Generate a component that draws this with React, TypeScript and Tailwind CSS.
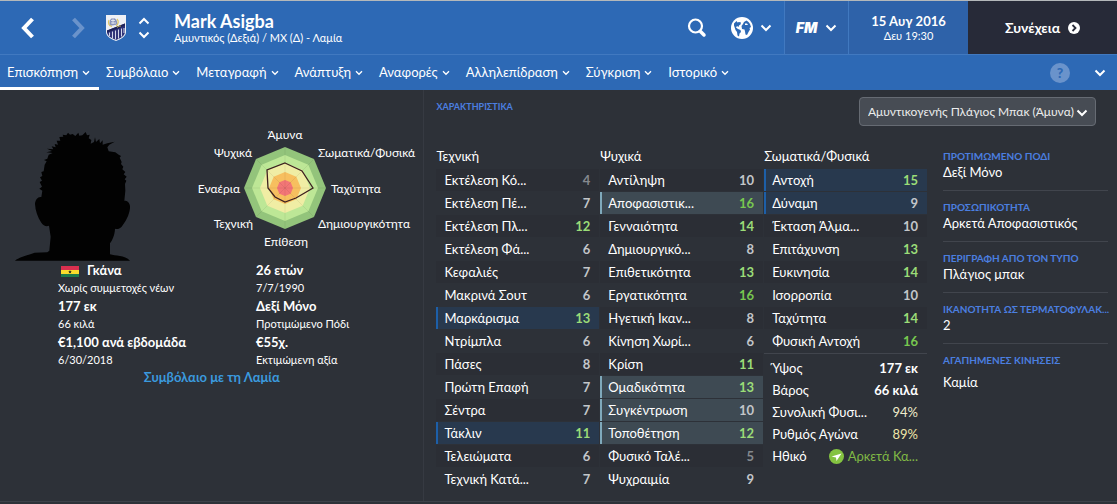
import { ReactNode, useState } from "react";

type Attr = { name: string; value: number; mark?: "key" | "useful" };

const technical: Attr[] = [
  { name: "Εκτέλεση Κό...", value: 4 },
  { name: "Εκτέλεση Πέ...", value: 7 },
  { name: "Εκτέλεση Πλ...", value: 12 },
  { name: "Εκτέλεση Φά...", value: 6 },
  { name: "Κεφαλιές", value: 7 },
  { name: "Μακρινά Σουτ", value: 6 },
  { name: "Μαρκάρισμα", value: 13, mark: "key" },
  { name: "Ντρίμπλα", value: 6 },
  { name: "Πάσες", value: 8 },
  { name: "Πρώτη Επαφή", value: 7 },
  { name: "Σέντρα", value: 7 },
  { name: "Τάκλιν", value: 11, mark: "key" },
  { name: "Τελειώματα", value: 6 },
  { name: "Τεχνική Κατά...", value: 7 },
];

const mental: Attr[] = [
  { name: "Αντίληψη", value: 10 },
  { name: "Αποφασιστικ...", value: 16, mark: "useful" },
  { name: "Γενναιότητα", value: 14 },
  { name: "Δημιουργικό...", value: 8 },
  { name: "Επιθετικότητα", value: 13 },
  { name: "Εργατικότητα", value: 16 },
  { name: "Ηγετική Ικαν...", value: 8 },
  { name: "Κίνηση Χωρί...", value: 6 },
  { name: "Κρίση", value: 11 },
  { name: "Ομαδικότητα", value: 13, mark: "useful" },
  { name: "Συγκέντρωση", value: 10, mark: "useful" },
  { name: "Τοποθέτηση", value: 12, mark: "useful" },
  { name: "Φυσικό Ταλέ...", value: 5 },
  { name: "Ψυχραιμία", value: 9 },
];

const physical: Attr[] = [
  { name: "Αντοχή", value: 15, mark: "key" },
  { name: "Δύναμη", value: 9, mark: "key" },
  { name: "Έκταση Άλμα...", value: 10 },
  { name: "Επιτάχυνση", value: 13 },
  { name: "Ευκινησία", value: 14 },
  { name: "Ισορροπία", value: 10 },
  { name: "Ταχύτητα", value: 14 },
  { name: "Φυσική Αντοχή", value: 16 },
];

const condition = [
  { name: "Ύψος", value: "177 εκ", style: "font-bold" },
  { name: "Βάρος", value: "66 κιλά", style: "font-bold" },
  { name: "Συνολική Φυσι...", value: "94%", style: "text-[#f0eccb]" },
  { name: "Ρυθμός Αγώνα", value: "89%", style: "text-[#efe6a8]" },
];

const tabs = [
  "Επισκόπηση",
  "Συμβόλαιο",
  "Μεταγραφή",
  "Ανάπτυξη",
  "Αναφορές",
  "Αλληλεπίδραση",
  "Σύγκριση",
  "Ιστορικό",
];

const details = [
  { label: "ΠΡΟΤΙΜΩΜΕΝΟ ΠΟΔΙ", value: "Δεξί Μόνο" },
  { label: "ΠΡΟΣΩΠΙΚΟΤΗΤΑ", value: "Αρκετά Αποφασιστικός" },
  { label: "ΠΕΡΙΓΡΑΦΗ ΑΠΟ ΤΟΝ ΤΥΠΟ", value: "Πλάγιος μπακ" },
  { label: "ΙΚΑΝΟΤΗΤΑ ΩΣ ΤΕΡΜΑΤΟΦΥΛΑΚ...", value: "2" },
];

function valueColor(v: number) {
  if (v > 15) return "text-[#78c850]";
  if (v > 10) return "text-[#9bdc78]";
  if (v > 5) return "text-[#c3c6ca]";
  return "text-[#85898e]";
}

function Chevron({ className = "" }: { className?: string }) {
  return (
    <svg viewBox="0 0 12 8" className={className} fill="none" stroke="currentColor" strokeWidth="2">
      <path d="M1.5 1.5 6 6l4.5-4.5" />
    </svg>
  );
}

function Crest() {
  return (
    <svg viewBox="0 0 20 26" className="h-[26px] w-5">
      <path d="M0 0h20v17c0 4-5 7.500-10 9C5 24.500 0 21 0 17z" fill="#eef0f5" />
      <path d="M1 15.500 19 8.500V17c0 3.500-4.500 6.500-9 8-4.500-1.500-9-4.500-9-8z" fill="#2a2f75" />
      <path d="M3.500 17.500v3.500M6.500 16.500v7M9.500 15.500v9M12.500 14.500v9M15.500 13.500v8M18 13v5" stroke="#d3d7ea" strokeWidth="1.100" />
      <path d="M1 15.500 19 8.500v2L1 17.500z" fill="#1e2257" />
      <path d="M3.500 11c-.5-4 .5-8 3.500-8s4.500 3 4.500 6.500z" fill="#8b95bd" />
      <path d="M3 5c-1.500 3 0 6 3 6.500M11 4c2 2 1.500 5.500-1 7" stroke="#e0c862" strokeWidth="1.200" fill="none" />
      <path d="M5 5.500h4M5 8h5M7 3v6" stroke="#eef0f5" strokeWidth=".8" />
      <path d="M11 12.500c1.500-1.200 2.500-1.500 4-1.500" stroke="#b9a552" strokeWidth="1" fill="none" />
    </svg>
  );
}

function Globe() {
  return (
    <svg viewBox="0 0 22 22" className="size-[22px]">
      <circle cx="11" cy="11" r="11" fill="#fff" />
      <path
        d="M3 6.500 5.500 4l1 1.500L8 5l2 .5-.5 2L8 8.500 7.500 10 6 9 5 10.500l2 1.500 2.500 1 .5 2-1.500 1.500-.5 3-1.500-1-.5-3.500L4.500 13 3.500 10 3 8.500z"
        fill="#2d69b5"
      />
      <path
        d="m12 7 1-2 2.500-1.500 2 1.500 1.500 2 1 3-1.500 1 .5 1.500-1.500 2.500-1.500 3-1.500-.5-.5-3-.5-2-2.500-.5-.5-3z"
        fill="#2d69b5"
      />
      <path d="M14 6.500h2l1 1.500h-3z" fill="#fff" />
    </svg>
  );
}

function Portrait() {
  return (
    <svg viewBox="42 36 348 387" className="h-[129px] w-[116px] shrink-0" aria-label="Mark Asigba">
      <path
        fill="#020202"
        d="M45 422C58 411 82 406 104 398L142 397 148 392 152 350 147 317C138 321 130 316 124 308 113 292 106 272 105 252 106 238 114 229 124 231L127 212 118 206 126 200 119 186 126 182 120 172 127 168 124 156 131 154 134 134 140 124 132 120 142 116 146 104 158 99 139 97 156 93 141 86 160 88 155 79 167 82 164 72 174 74 170 62 181 62 178 51 190 50 188 44 199 46 204 38 210 44 218 42 226 48 235 38 238 47 247 46 257 36 261 46 269 44 266 55 274 60 272 71 282 66 285 52 288 66 298 57 300 70 308 61 308 74 322 70 344 65 328 74 322 82 326 94 346 97 356 104 363 108 359 113 365 126 363 132 370 140 367 148 376 156 371 163 380 170 374 178 379 182 375 192 376 212 373 242C384 242 391 250 390 264 388 286 376 306 365 320 358 328 350 328 345 326 344 346 338 358 330 370L330 403C345 408 374 405 390 422Z"
      />
    </svg>
  );
}

const rings = [
  { r: 41, fill: "#93c47b" },
  { r: 33, fill: "#bde796" },
  { r: 25, fill: "#f0eda4" },
  { r: 16, fill: "#f7bf5f" },
  { r: 8, fill: "#f27676" },
];

const radarLabels = [
  { text: "Άμυνα", x: 95, y: 15, anchor: "middle" },
  { text: "Σωματικά/Φυσικά", x: 128, y: 33, anchor: "start" },
  { text: "Ταχύτητα", x: 141, y: 69, anchor: "start" },
  { text: "Δημιουργικότητα", x: 128, y: 104, anchor: "start" },
  { text: "Επίθεση", x: 96, y: 122, anchor: "middle" },
  { text: "Τεχνική", x: 63, y: 104, anchor: "end" },
  { text: "Εναέρια", x: 50, y: 69, anchor: "end" },
  { text: "Ψυχικά", x: 62, y: 33, anchor: "end" },
] as const;

function octagon(r: number) {
  return Array.from({ length: 8 }, (_, i) => {
    const a = (i * Math.PI) / 4;
    return `${95 + r * Math.sin(a)},${64 - r * Math.cos(a)}`;
  }).join(" ");
}

function Radar() {
  return (
    <svg viewBox="0 0 230 130" className="h-[130px] w-[230px] shrink-0">
      {rings.map((ring) => (
        <polygon key={ring.r} points={octagon(ring.r)} fill={ring.fill} />
      ))}
      <path d="M95 23v82M54 64h82M66 35l58 58M66 93l58-58" stroke="#000" strokeOpacity=".06" />
      <path
        d="M95 39 112 47 123 64 106 74 95 78 85 73 78 64 77 46z"
        fill="none"
        stroke="#3d2020"
        strokeWidth="1.300"
      />
      {radarLabels.map((l) => (
        <text key={l.text} x={l.x} y={l.y} textAnchor={l.anchor} className="fill-white text-[12px]">
          {l.text}
        </text>
      ))}
    </svg>
  );
}

function Flag() {
  return (
    <svg viewBox="0 0 18 11" className="h-[11px] w-[18px]">
      <rect width="18" height="4" fill="#d9304f" />
      <rect y="4" width="18" height="4" fill="#fbdc2c" />
      <rect y="8" width="18" height="3" fill="#1f7a4d" />
      <path d="m9 4 .5 1.300h1.300l-1 .8.400 1.400L9 6.700l-1.200.8.400-1.400-1-.8h1.300z" fill="#222" />
    </svg>
  );
}

function Fact({ title, sub }: { title: ReactNode; sub: string }) {
  return (
    <div>
      <div className="flex h-5 items-center text-[13px] font-bold">{title}</div>
      <div className="h-4 text-[11px] leading-[14px]">{sub}</div>
    </div>
  );
}

const rowStyle = {
  key: "border-[#1d5fa8] bg-[#28394e]",
  useful: "border-[#7fa9bb] bg-[#3e4a53]",
};

function AttributeTable({ title, items }: { title: string; items: Attr[] }) {
  return (
    <table className="w-full border-separate border-spacing-x-0 border-spacing-y-px text-[13px]">
      <caption className="h-6 text-left leading-6">{title}</caption>
      <tbody>
        {items.map((item, i) => {
          const plain = i % 2 ? "border-transparent" : "border-[#2b2e35] bg-[#2b2e35]";
          const style = item.mark ? rowStyle[item.mark] : plain;
          return (
            <tr key={item.name} className="h-[22px]">
              <th scope="row" className={`border-l-2 p-0 pl-1.5 text-left font-normal leading-[22px] whitespace-nowrap ${style}`}>
                {item.name}
              </th>
              <td className={`p-0 pr-[9px] text-right font-bold leading-[22px] ${style} ${valueColor(item.value)}`}>
                {item.value}
              </td>
            </tr>
          );
        })}
      </tbody>
    </table>
  );
}

export default function App() {
  const [tab, setTab] = useState(0);

  return (
    <div className="min-h-screen border-t border-[#b4b8ba] bg-[#2d3138] font-['Lato','Noto_Sans',sans-serif] text-white">
      <header className="flex h-[53px] bg-[#2d69b5]">
        <div className="flex flex-1 items-center pl-5">
          <button aria-label="Πίσω" className="w-[15px]">
            <svg viewBox="0 0 15 24" fill="none" stroke="#fff" strokeWidth="4">
              <path d="M12.500 3 4 12l8.500 9" />
            </svg>
          </button>
          <button aria-label="Εμπρός" className="ml-9 w-[15px]">
            <svg viewBox="0 0 15 24" fill="none" stroke="#6a93cb" strokeWidth="4">
              <path d="M2.500 3 11 12l-8.500 9" />
            </svg>
          </button>
          <div className="ml-5">
            <Crest />
          </div>
          <div className="ml-3 flex flex-col gap-1.5">
            <button aria-label="Προηγούμενος">
              <Chevron className="h-2 w-3 rotate-180" />
            </button>
            <button aria-label="Επόμενος">
              <Chevron className="h-2 w-3" />
            </button>
          </div>
          <div className="ml-6">
            <h1 className="text-[18px] font-bold leading-5">Mark Asigba</h1>
            <p className="text-[11px] leading-[13px]">Αμυντικός (Δεξιά) / ΜΧ (Δ) - Λαμία</p>
          </div>
        </div>
        <button aria-label="Αναζήτηση" className="mr-6">
          <svg viewBox="0 0 20 20" className="size-5" fill="none" stroke="#fff">
            <circle cx="8.500" cy="8" r="6.500" strokeWidth="2.200" />
            <path d="m13.500 13.500 3.500 3.500" strokeWidth="3.500" strokeLinecap="round" />
          </svg>
        </button>
        <button aria-label="Κόσμος" className="mr-3 flex items-center gap-[7px]">
          <Globe />
          <Chevron className="h-2 w-3" />
        </button>
        <button aria-label="FM" className="flex w-16 items-center justify-center gap-2 border-l border-[#4179c0] bg-[#2e62a9]">
          <span className="font-['Inter',sans-serif] text-[14px] font-black italic">FM</span>
          <Chevron className="h-2 w-3" />
        </button>
        <div className="flex w-[120px] flex-col items-center justify-center border-l border-[#4179c0] bg-[#2e62a9]">
          <span className="text-[13px] font-bold leading-4">15 Αυγ 2016</span>
          <span className="text-[11px] leading-[14px]">Δευ 19:30</span>
        </div>
        <button className="flex w-[149px] items-center justify-center gap-2 bg-[#272a38] text-[14px] font-bold">
          Συνέχεια
          <svg viewBox="0 0 12 12" className="size-3">
            <circle cx="6" cy="6" r="6" fill="#fff" />
            <path d="m4.500 3 3 3-3 3" fill="none" stroke="#272a38" strokeWidth="1.800" />
          </svg>
        </button>
      </header>

      <nav className="flex h-9 items-stretch border-t border-[#4179c0] bg-[#2d69b5]">
        {tabs.map((t, i) => (
          <button
            key={t}
            onClick={() => setTab(i)}
            className={`flex items-center gap-1 border-b-[3px] pt-[3px] pr-[9px] pl-[7px] text-[13px] ${tab === i ? "border-white" : "border-transparent"}`}
          >
            {t}
            <Chevron className="h-1.5 w-2 shrink-0" />
          </button>
        ))}
        <div className="ml-auto flex items-center gap-6 pr-[11px]">
          <button aria-label="Βοήθεια" className="size-5 rounded-full bg-[#6a93cb] text-[14px] font-black leading-5 text-[#2d69b5]">
            ?
          </button>
          <button aria-label="Περισσότερα">
            <Chevron className="h-2 w-3" />
          </button>
        </div>
      </nav>

      <main className="flex border-b border-[#3d4149]">
        <section className="w-[38%] border-r border-[#363a42] pt-[34px]">
          <div className="flex items-end justify-between pr-[3px] pl-3.5">
            <Portrait />
            <div className="pb-[7px]">
              <Radar />
            </div>
          </div>
          <div className="flex pl-[58px]">
            <div className="w-[198px]">
              <Fact
                title={
                  <>
                    <span className="mr-2 ml-[3px]">
                      <Flag />
                    </span>
                    Γκάνα
                  </>
                }
                sub="Χωρίς συμμετοχές νέων"
              />
              <Fact title="177 εκ" sub="66 κιλά" />
              <Fact title="€1,100 ανά εβδομάδα" sub="6/30/2018" />
            </div>
            <div>
              <Fact title="26 ετών" sub="7/7/1990" />
              <Fact title="Δεξί Μόνο" sub="Προτιμώμενο Πόδι" />
              <Fact title="€55χ." sub="Εκτιμώμενη αξία" />
            </div>
          </div>
          <div className="text-center text-[13px] leading-4">
            <a href="#contract" className="font-bold text-[#3b9ade]">
              Συμβόλαιο με τη Λαμία
            </a>
          </div>
        </section>

        <section className="flex-1 pr-[9px] pb-2.5 pl-3">
          <div className="flex h-[54px] justify-between pt-[7px] pr-3">
            <h2 className="text-[9px] font-bold leading-5 text-[#4b7fe0]">ΧΑΡΑΚΤΗΡΙΣΤΙΚΑ</h2>
            <div className="relative w-[237px]">
              <select
                aria-label="Ρόλος"
                className="h-[29px] w-full appearance-none rounded-sm border border-[#666b73] bg-[#474c54] pl-2 text-[12px] text-[#eceded]"
              >
                <option>Αμυντικογενής Πλάγιος Μπακ (Άμυνα)</option>
              </select>
              <Chevron className="pointer-events-none absolute top-3 right-2 h-2 w-3" />
            </div>
          </div>

          <div className="flex gap-4">
            <div className="grid flex-1 grid-cols-3 items-start gap-px">
              <AttributeTable title="Τεχνική" items={technical} />
              <AttributeTable title="Ψυχικά" items={mental} />
              <div>
                <AttributeTable title="Σωματικά/Φυσικά" items={physical} />
                <dl className="border-t border-[#41454d] pt-[3px] pr-[9px] pl-2 text-[13px] leading-[22px] whitespace-nowrap">
                  {condition.map((c) => (
                    <div key={c.name} className="flex justify-between">
                      <dt>{c.name}</dt>
                      <dd className={c.style}>{c.value}</dd>
                    </div>
                  ))}
                  <div className="flex justify-between">
                    <dt>Ηθικό</dt>
                    <dd className="flex items-center gap-1 text-[#80b845]">
                      <svg viewBox="0 0 15 15" className="size-[15px]">
                        <circle cx="7.500" cy="7.500" r="7.500" fill="#84c341" />
                        <path d="M12.500 4.500 7.500 12 7 8.500 2.500 7.500z" fill="#fff" />
                      </svg>
                      Αρκετά Κα...
                    </dd>
                  </div>
                </dl>
              </div>
            </div>

            <dl className="w-[165px]">
              {details.map((d) => (
                <div key={d.label} className="mb-1 h-[47px] border-b border-[#41454d]">
                  <dt className="pt-1 text-[10px] font-bold leading-4 whitespace-nowrap text-[#4b7fe0]">{d.label}</dt>
                  <dd className="text-[13px] leading-4">{d.value}</dd>
                </div>
              ))}
              <dt className="pt-1 text-[10px] font-bold leading-4 text-[#4b7fe0]">ΑΓΑΠΗΜΕΝΕΣ ΚΙΝΗΣΕΙΣ</dt>
              <dd className="pt-1 text-[13px] leading-5">Καμία</dd>
            </dl>
          </div>
        </section>
      </main>
    </div>
  );
}
